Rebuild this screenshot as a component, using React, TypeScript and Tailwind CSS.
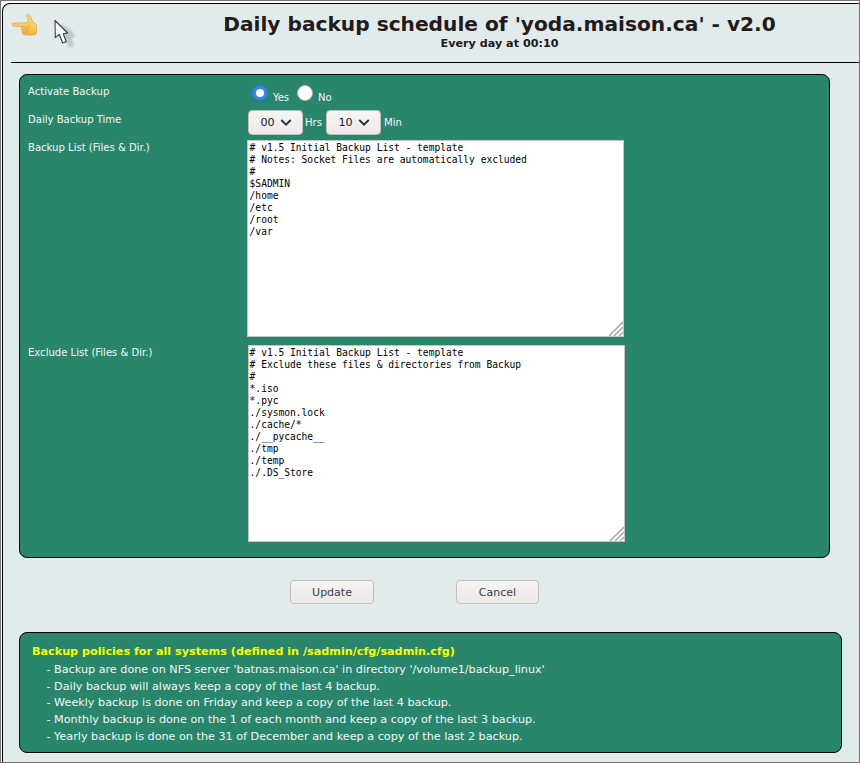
import React from 'react';

const backupList = `# v1.5 Initial Backup List - template
# Notes: Socket Files are automatically excluded
#
$SADMIN
/home
/etc
/root
/var`;

const excludeList = `# v1.5 Initial Backup List - template
# Exclude these files & directories from Backup
#
*.iso
*.pyc
./sysmon.lock
./cache/*
./__pycache__
./tmp
./temp
./.DS_Store`;

const policies = [
  "- Backup are done on NFS server 'batnas.maison.ca' in directory '/volume1/backup_linux'",
  '- Daily backup will always keep a copy of the last 4 backup.',
  '- Weekly backup is done on Friday and keep a copy of the last 4 backup.',
  '- Monthly backup is done on the 1 of each month and keep a copy of the last 3 backup.',
  '- Yearly backup is done on the 31 of December and keep a copy of the last 2 backup.',
];

function HandIcon() {
  return (
    <svg className="block h-[24px] w-[26px]" viewBox="0 0 26 24">
      <defs>
        <linearGradient id="skin" x1="0" y1="0" x2="0" y2="1">
          <stop offset="0" stopColor="#fbd774" />
          <stop offset="0.6" stopColor="#fbcb5c" />
          <stop offset="1" stopColor="#efaf48" />
        </linearGradient>
      </defs>
      <path
        d="M1.5 9.7 C.4 9.9 .3 12 1.5 12.4 L10 13.1 C9.7 14.3 9.9 15.1 10.6 15.7 C10.1 16.9 10.5 17.9 11.2 18.3 C10.8 19.8 11.7 21.2 13.5 21.3 L20 21.6 C22 21.7 24 21 25.2 20.2 L25.2 10.7 C23.2 10.1 21.9 8.7 21 7 L18.3 1.2 C17.5 0 15.5 .2 15.4 1.6 C15.2 2.7 16.3 4.7 16.7 6.1 L16.8 8.6 C15.8 9.3 13.5 9 11.9 9.1 Z"
        transform="translate(0 .6) translate(.3 0)"
        fill="url(#skin)" stroke="#dfa548" strokeWidth=".65"
      />
      <path d="M10 13.7 L15.5 13.8 Q17.5 13.9 17.2 15.1 Q16.9 16.4 14.9 16.4 H10.6 M14.9 16.4 Q16.9 16.5 16.6 17.9 Q16.2 19.1 14.5 19.1 H11.2 M14.5 19.1 Q16 19.5 15.4 21.5 M17.2 13.9 Q18.7 12.9 18.3 11.1" fill="none" stroke="#d79a3c" strokeWidth=".7" />
    </svg>
  );
}

function PointerIcon() {
  return (
    <svg className="block h-[34px] w-[28px]" viewBox="0 0 28 34">
      <defs>
        <filter id="soft" x="-30%" y="-30%" width="160%" height="160%">
          <feGaussianBlur stdDeviation=".8" />
        </filter>
      </defs>
      <path d="M7 5 L7.6 21 L11.4 19 L14 27 Q16 29.5 20 27 L17.5 19.5 L21.5 17 Q18 11.5 11 7 Z" fill="#9ba3a4" opacity=".5" filter="url(#soft)" />
      <path d="M1 1.5 L1.3 18.7 L5.3 15.3 L8.7 24 L12.3 22.7 L9.2 14.7 L13.6 14 Z" fill="#fbfbfb" stroke="#3c3f42" strokeWidth="1.1" strokeLinejoin="round" />
    </svg>
  );
}

function Radio({ checked }: { checked?: boolean }) {
  return checked ? (
    <span className="mt-px flex size-4 items-center justify-center rounded-full border border-[#3675d3] bg-[#3b84e9]">
      <span className="size-2 rounded-full bg-white" />
    </span>
  ) : (
    <span className="mt-px size-4 rounded-full border border-[#b9b4af] bg-white" />
  );
}

function Select({ value }: { value: string }) {
  return (
    <div className="flex h-[25px] w-[55px] items-center rounded-[4px] border border-[#c3beb9] bg-linear-to-b from-[#f6f5f4] to-[#edebe9] pl-[11.5px] font-['DejaVu_Sans',sans-serif] text-[11.2px] text-[#1a1a1a]">
      <span className="w-[19px] pt-px">{value}</span>
      <svg className="h-[8px] w-[12px]" viewBox="0 0 12 8">
        <path d="M1.8 1.5 L6 5.7 L10.2 1.5" fill="none" stroke="#2e3436" strokeWidth="2" strokeLinecap="round" />
      </svg>
    </div>
  );
}

function TextBox({ text, className }: { text: string; className: string }) {
  return (
    <div className="relative h-[197px] w-[377px] border border-[#c8c4c0] bg-white">
      <pre className={"pt-[1px] font-['DejaVu_Sans_Mono',monospace] text-[9.6px] leading-[12px] text-black " + className}>{text}</pre>
      <svg className="absolute bottom-0 right-0 size-[15px]" viewBox="0 0 15 15">
        <path d="M1 15 L15 1 M6 15 L15 6 M11 15 L15 11" fill="none" stroke="#aaa" strokeWidth="1.6" />
      </svg>
    </div>
  );
}

function Label({ children }: { children: React.ReactNode }) {
  return <div className="w-[219px] shrink-0 pt-px leading-[14px]">{children}</div>;
}

function Button({ children, className }: { children: React.ReactNode; className: string }) {
  return (
    <button className={'h-[24px] rounded-[4px] border border-[#c5c0bb] bg-linear-to-b from-[#f6f5f4] to-[#ebe8e6] pt-px text-[11px] leading-[21px] text-[#3a3f41] ' + className}>
      {children}
    </button>
  );
}

export default function App() {
  return (
    <div className="h-[763px] w-[860px] overflow-hidden border border-[#777] bg-white pl-px pt-[2px] font-['DejaVu_Sans',sans-serif]">
      <div className="h-[760px] rounded-tl-[8px] border-l border-t border-black bg-[#e2ebec] pl-2">
        <header className="flex h-[59px] border-b border-black text-[#231a19]">
          <div className="flex w-[65px] shrink-0">
            <div className="pt-[9px]"><HandIcon /></div>
            <div className="pl-[17px] pt-[15px]"><PointerIcon /></div>
          </div>
          <div className="ml-[147px] w-[553px] text-center">
            <h1 className="whitespace-nowrap pt-[8px] text-[20.16px] font-bold leading-[24px]">Daily backup schedule of 'yoda.maison.ca' - v2.0</h1>
            <div className="pt-px text-[11.2px] font-bold leading-[14px]">Every day at 00:10</div>
          </div>
        </header>

        <section className="ml-2 mt-[11px] h-[484px] w-[811px] rounded-[8px] border border-black bg-[#29866c] pl-2 font-['DejaVu_Sans_Condensed','DejaVu_Sans',sans-serif] text-[11.2px] text-[#f1f7f5]">
          <div className="flex h-[33px] pt-[9px]">
            <Label>Activate Backup</Label>
            <div className="flex pl-[5px] leading-[14px]">
              <Radio checked />
              <span className="w-[29px] pl-[5px] pt-[7px]">Yes</span>
              <Radio />
              <span className="pl-[5px] pt-[7px]">No</span>
            </div>
          </div>
          <div className="flex h-[32px]">
            <div className="pt-[4px]"><Label>Daily Backup Time</Label></div>
            <div className="flex h-[25px] items-center pl-px pt-[4px]">
              <Select value="00" />
              <span className="w-[23px] pl-[2px] pt-[2px]">Hrs</span>
              <Select value="10" />
              <span className="pl-[3px] pt-[2px]">Min</span>
            </div>
          </div>
          <div className="flex h-[205px]">
            <Label>Backup List (Files &amp; Dir.)</Label>
            <TextBox text={backupList} className="pl-[1.6px]" />
          </div>
          <div className="flex">
            <Label>Exclude List (Files &amp; Dir.)</Label>
            <div className="pl-px"><TextBox text={excludeList} className="pl-[0.6px]" /></div>
          </div>
        </section>

        <div className="flex gap-[82px] pl-[279px] pt-[22px]">
          <Button className="w-[84px]">Update</Button>
          <Button className="w-[83px]">Cancel</Button>
        </div>

        <section className="ml-2 mt-[28px] h-[121px] w-[823px] rounded-[8px] border border-black bg-[#29866c] pl-3 pt-[11px] text-[11.2px] text-[#f1f7f5]">
          <h2 className="font-bold leading-[16px] text-[#f7ff00]">Backup policies for all systems (defined in /sadmin/cfg/sadmin.cfg)</h2>
          <ul className="pl-[14.5px] pt-[2px] leading-[16.7px]">
            {policies.map((policy) => <li key={policy}>{policy}</li>)}
          </ul>
        </section>
      </div>
    </div>
  );
}
